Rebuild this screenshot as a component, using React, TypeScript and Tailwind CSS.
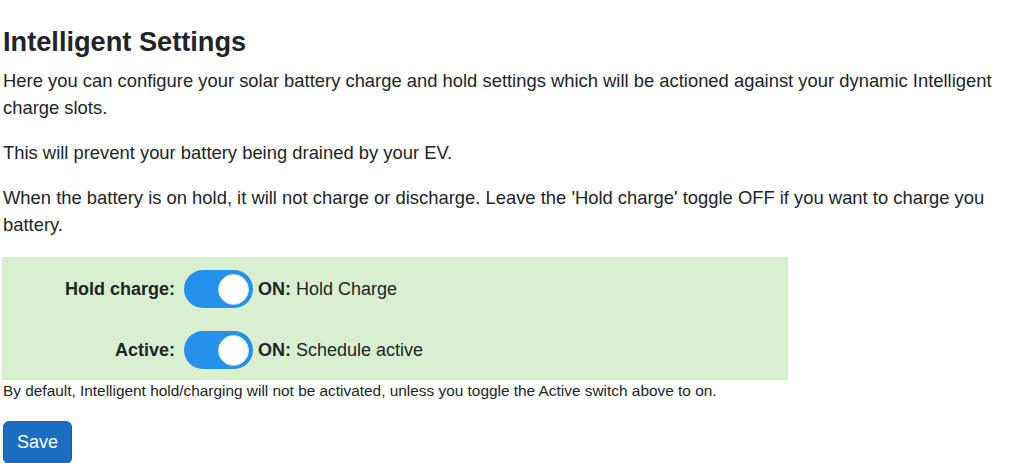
import { useState } from "react";

const Toggle = ({ on, onChange }: { on: boolean; onChange: () => void }) => (
  <button
    type="button"
    onClick={onChange}
    className={`flex h-[38px] w-[69px] items-center rounded-full px-[4px] ${
      on ? "justify-end bg-[#2591ea]" : "justify-start bg-[#ced4da]"
    }`}
  >
    <span className="block h-[31px] w-[31px] rounded-full border border-[#cfe3f7] bg-white" />
  </button>
);

const App = () => {
  const [hold, setHold] = useState(true);
  const [active, setActive] = useState(true);

  return (
    <div className="min-h-screen bg-white px-[3px] pt-[26px] font-['Liberation_Sans',Arial,sans-serif] text-[#212529]">
      <h3 className="mb-[9px] text-[27.2px] font-bold leading-[32px]">Intelligent Settings</h3>
      <p className="mb-[18px] text-[18.4px] leading-[27px]">
        Here you can configure your solar battery charge and hold settings which will be actioned against your dynamic
        Intelligent charge slots.
      </p>
      <p className="mb-[18px] text-[18.4px] leading-[27px]">This will prevent your battery being drained by your EV.</p>
      <p className="mb-[19px] text-[18.4px] leading-[27px]">
        When the battery is on hold, it will not charge or discharge. Leave the 'Hold charge' toggle OFF if you want to
        charge you battery.
      </p>

      <div className="-ml-px flex w-[786px] flex-col gap-[23px] border border-[#d6ecc9] bg-[#d9f0d0] pt-[12px] pb-[10px]">
        <div className="flex items-center text-[18px]">
          <label className="w-[172px] text-right font-bold">Hold charge:</label>
          <div className="ml-[9px]">
            <Toggle on={hold} onChange={() => setHold(!hold)} />
          </div>
          <span className="ml-[5px]">
            <b>{hold ? "ON:" : "OFF:"}</b> Hold Charge
          </span>
        </div>
        <div className="flex items-center text-[18px]">
          <label className="w-[172px] text-right font-bold">Active:</label>
          <div className="ml-[9px]">
            <Toggle on={active} onChange={() => setActive(!active)} />
          </div>
          <span className="ml-[5px]">
            <b>{active ? "ON:" : "OFF:"}</b> Schedule active
          </span>
        </div>
      </div>
      <p className="text-[15.4px] leading-[21px]">
        By default, Intelligent hold/charging will not be activated, unless you toggle the Active switch above to on.
      </p>

      <button className="mt-[20px] rounded-[6px] border border-[#1861ac] bg-[#1b6ec2] px-[13px] py-[7px] text-[18px] leading-[27px] text-white">
        Save
      </button>
    </div>
  );
};

export default App;
